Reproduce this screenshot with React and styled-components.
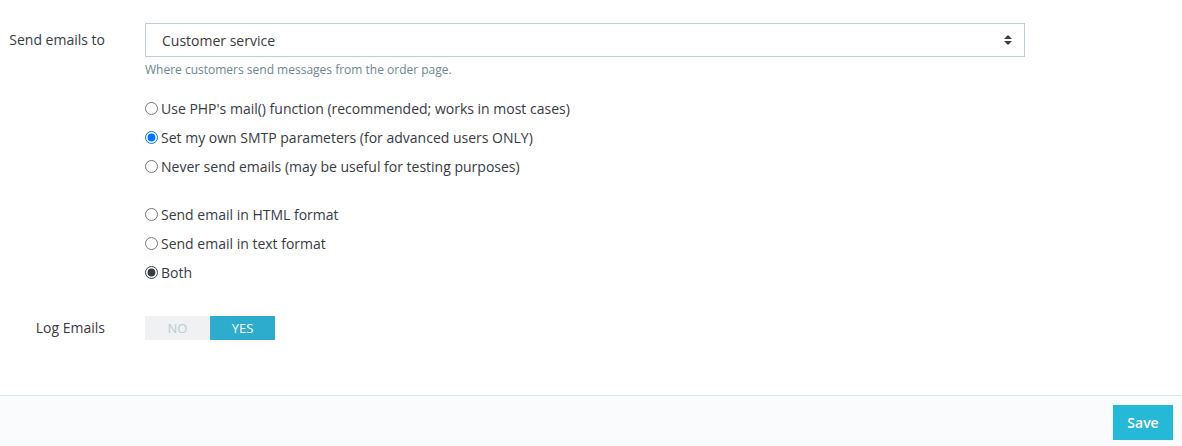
import React, { useState } from "react";
import styled, { createGlobalStyle } from "styled-components";

const Global = createGlobalStyle`
  body {
    margin: 0;
    background: #fff;
    font-family: "Open Sans", "Liberation Sans", sans-serif;
    color: #363a41;
  }
`;

const Page = styled.div`
  width: 1182px;
  height: 446px;
  display: flex;
  flex-direction: column;
`;

const Form = styled.div`
  flex: 1;
  padding-top: 23px;
`;

const Row = styled.div`
  display: grid;
  grid-template-columns: 105px 880px;
  column-gap: 40px;
  align-items: ${(p) => (p.top ? "start" : "center")};
  margin-top: ${(p) => p.mt || 0}px;
`;

const Label = styled.label`
  font-size: 14px;
  text-align: right;
  line-height: ${(p) => p.lh || 20}px;
  white-space: nowrap;
`;

const SelectBox = styled.div`
  height: 34px;
  box-sizing: border-box;
  border: 1px solid #bbcdd2;
  display: flex;
  align-items: center;
  justify-content: space-between;
  padding: 0 12px 0 16px;
  font-size: 14px;
`;

const Help = styled.div`
  font-size: 12px;
  color: #6c868e;
  margin-top: 4px;
  line-height: 18px;
`;

const Group = styled.div`
  display: flex;
  flex-direction: column;
  margin-top: ${(p) => p.mt || 0}px;
`;

const RadioRow = styled.label`
  height: 29px;
  display: flex;
  align-items: center;
  font-size: 14px;
  white-space: nowrap;
`;

const Radio = styled.input`
  width: 13px;
  height: 13px;
  margin: 0 3px 0 0;
  accent-color: ${(p) => p.$tone || "#0075ff"};
`;

const Switch = styled.div`
  display: flex;
  width: 130px;
  height: 24px;
`;

const SwitchPart = styled.div`
  flex: 1;
  display: flex;
  align-items: center;
  justify-content: center;
  font-size: 13px;
  background: ${(p) => (p.on ? "#2eacce" : "#eff1f2")};
  color: ${(p) => (p.on ? "#fff" : "#bbcdd2")};
`;

const Footer = styled.div`
  height: 51px;
  box-sizing: border-box;
  border-top: 1px solid #dbe6e9;
  background: #fafbfc;
  display: flex;
  justify-content: flex-end;
  align-items: flex-start;
  padding: 9px 9px 0 0;
`;

const SaveButton = styled.button`
  width: 60px;
  height: 35px;
  border: none;
  background: #25b9d7;
  color: #fff;
  font-family: "Open Sans", "Liberation Sans", sans-serif;
  font-size: 14px;
  font-weight: 600;
`;

const Arrows = () => (
  <svg width="8" height="10" viewBox="0 0 8 10">
    <path d="M4 0 L8 4 L0 4 Z M0 6 L8 6 L4 10 Z" fill="#363a41" />
  </svg>
);

export default function App() {
  const [method, setMethod] = useState("smtp");
  const [format, setFormat] = useState("both");
  return (
    <Page>
      <Global />
      <Form>
        <Row top>
          <Label lh={34}>Send emails to</Label>
          <div>
            <SelectBox>
              <span>Customer service</span>
              <Arrows />
            </SelectBox>
            <Help>Where customers send messages from the order page.</Help>
          </div>
        </Row>
        <Row mt={15}>
          <span />
          <div>
            <Group>
              <RadioRow>
                <Radio type="radio" name="m" checked={method === "mail"} onChange={() => setMethod("mail")} />
                Use PHP's mail() function (recommended; works in most cases)
              </RadioRow>
              <RadioRow>
                <Radio type="radio" name="m" checked={method === "smtp"} onChange={() => setMethod("smtp")} />
                Set my own SMTP parameters (for advanced users ONLY)
              </RadioRow>
              <RadioRow>
                <Radio type="radio" name="m" checked={method === "none"} onChange={() => setMethod("none")} />
                Never send emails (may be useful for testing purposes)
              </RadioRow>
            </Group>
            <Group mt={19}>
              <RadioRow>
                <Radio type="radio" name="f" $tone="#363a41" checked={format === "html"} onChange={() => setFormat("html")} />
                Send email in HTML format
              </RadioRow>
              <RadioRow>
                <Radio type="radio" name="f" $tone="#363a41" checked={format === "text"} onChange={() => setFormat("text")} />
                Send email in text format
              </RadioRow>
              <RadioRow>
                <Radio type="radio" name="f" $tone="#363a41" checked={format === "both"} onChange={() => setFormat("both")} />
                Both
              </RadioRow>
            </Group>
          </div>
        </Row>
        <Row mt={29}>
          <Label lh={24}>Log Emails</Label>
          <Switch>
            <SwitchPart>NO</SwitchPart>
            <SwitchPart on>YES</SwitchPart>
          </Switch>
        </Row>
      </Form>
      <Footer>
        <SaveButton>Save</SaveButton>
      </Footer>
    </Page>
  );
}
